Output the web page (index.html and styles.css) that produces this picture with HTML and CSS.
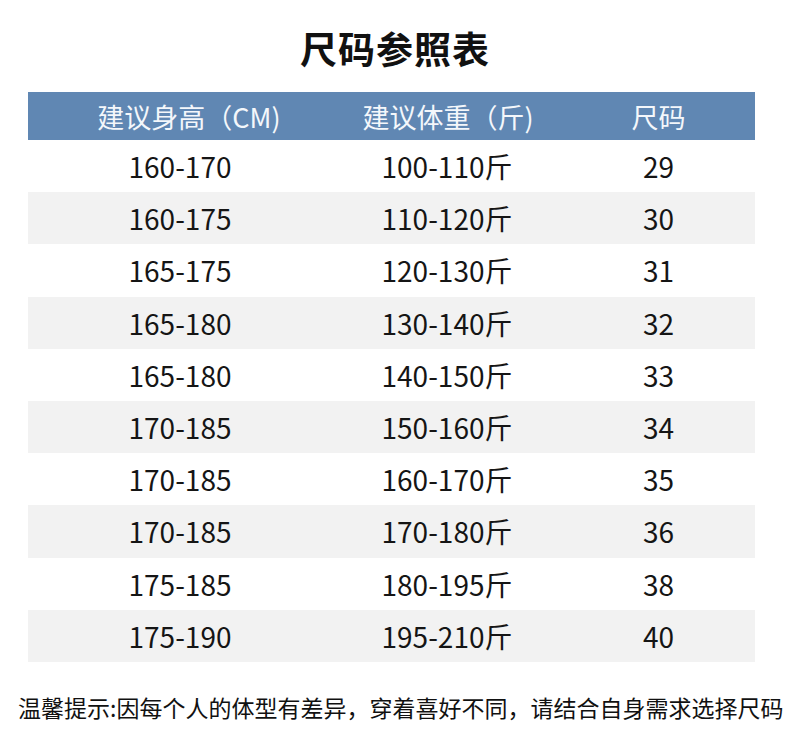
FILE: index.html
```html
<!DOCTYPE html>
<html lang="zh-CN">
<head>
<meta charset="utf-8">
<title>尺码参照表</title>
<link rel="stylesheet" href="styles.css">
</head>
<body>
<div class="page">
  <h1 class="title">尺码参照表</h1>
  <div class="table">
    <div class="row head">
      <div class="c1">建议身高（CM)</div>
      <div class="c2">建议体重（斤)</div>
      <div class="c3">尺码</div>
    </div>
    <div class="row"><div class="c1">160-170</div><div class="c2">100-110斤</div><div class="c3">29</div></div>
    <div class="row alt"><div class="c1">160-175</div><div class="c2">110-120斤</div><div class="c3">30</div></div>
    <div class="row"><div class="c1">165-175</div><div class="c2">120-130斤</div><div class="c3">31</div></div>
    <div class="row alt"><div class="c1">165-180</div><div class="c2">130-140斤</div><div class="c3">32</div></div>
    <div class="row"><div class="c1">165-180</div><div class="c2">140-150斤</div><div class="c3">33</div></div>
    <div class="row alt"><div class="c1">170-185</div><div class="c2">150-160斤</div><div class="c3">34</div></div>
    <div class="row"><div class="c1">170-185</div><div class="c2">160-170斤</div><div class="c3">35</div></div>
    <div class="row alt"><div class="c1">170-185</div><div class="c2">170-180斤</div><div class="c3">36</div></div>
    <div class="row"><div class="c1">175-185</div><div class="c2">180-195斤</div><div class="c3">38</div></div>
    <div class="row alt"><div class="c1">175-190</div><div class="c2">195-210斤</div><div class="c3">40</div></div>
  </div>
  <p class="note">温馨提示:因每个人的体型有差异，穿着喜好不同，请结合自身需求选择尺码</p>
</div>
</body>
</html>
```
FILE: styles.css
```css
html, body {
  margin: 0;
  padding: 0;
  background: #ffffff;
}
.page {
  width: 790px;
  height: 755px;
  font-family: "Noto Sans CJK SC", "Noto Sans", sans-serif;
  color: #151515;
  overflow: hidden;
}
.title {
  margin: 29px 0 25px;
  font-size: 37px;
  line-height: 38px;
  font-weight: 700;
  text-align: center;
  letter-spacing: 1px;
  color: #111;
}
.table {
  margin: 0 35px 0 28px;
  width: 727px;
}
.row {
  display: grid;
  grid-template-columns: 304px 230px 193px;
  height: 52.2px;
  align-items: center;
  font-size: 28px;
  text-align: center;
}
.row.alt {
  background: #f2f2f2;
}
.row.head {
  height: 48px;
  background: #6087b3;
  color: #f4f7fb;
  font-size: 27px;
}
.row.head .c1 {
  padding-left: 18px;
}
.row.head .c2 {
  padding-left: 2px;
}
.note {
  margin: 30px 0 0 18px;
  font-size: 23px;
  line-height: 30px;
  white-space: nowrap;
  color: #111;
}
```
